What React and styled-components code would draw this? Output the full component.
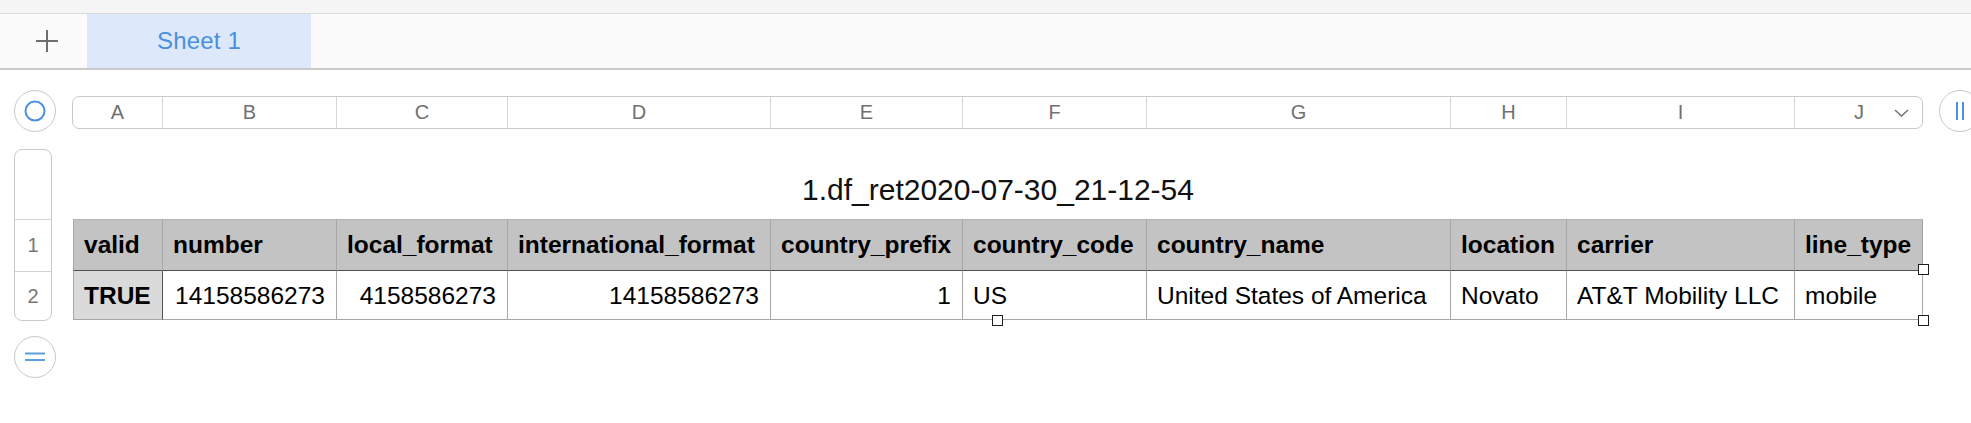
import React from 'react';
import styled, { createGlobalStyle } from 'styled-components';

const GlobalStyle = createGlobalStyle`
  html, body {
    margin: 0;
    padding: 0;
    background: #ffffff;
    overflow: hidden;
  }
  body {
    font-family: "Liberation Sans", Arial, sans-serif;
    color: #000;
  }
`;

const COLUMNS = [
  { letter: 'A', width: 90, title: 'valid' },
  { letter: 'B', width: 174, title: 'number' },
  { letter: 'C', width: 171, title: 'local_format' },
  { letter: 'D', width: 263, title: 'international_format' },
  { letter: 'E', width: 192, title: 'country_prefix' },
  { letter: 'F', width: 184, title: 'country_code' },
  { letter: 'G', width: 304, title: 'country_name' },
  { letter: 'H', width: 116, title: 'location' },
  { letter: 'I', width: 228, title: 'carrier' },
  { letter: 'J', width: 128, title: 'line_type' },
];

const ROW = [
  { value: 'TRUE', align: 'left' },
  { value: '14158586273', align: 'right' },
  { value: '4158586273', align: 'right' },
  { value: '14158586273', align: 'right' },
  { value: '1', align: 'right' },
  { value: 'US', align: 'left' },
  { value: 'United States of America', align: 'left' },
  { value: 'Novato', align: 'left' },
  { value: 'AT&T Mobility LLC', align: 'left' },
  { value: 'mobile', align: 'left' },
];

const gridColumns = COLUMNS.map(c => `${c.width}px`).join(' ');

const Page = styled.div`
  width: 1971px;
  height: 423px;
  background: #ffffff;
`;

const TopStrip = styled.div`
  height: 13px;
  background: #f5f5f5;
  border-bottom: 1px solid #d9d9d9;
`;

const TabBar = styled.div`
  display: flex;
  height: 54px;
  background: #fbfbfb;
  border-bottom: 2px solid #cbcbcb;
`;

const AddSheet = styled.div`
  width: 87px;
  display: flex;
  align-items: center;
  justify-content: center;
  padding-left: 6px;
  box-sizing: border-box;
`;

const SheetTab = styled.div`
  width: 224px;
  display: flex;
  align-items: center;
  justify-content: center;
  background: #dde9fa;
  color: #4a8fdd;
  font-size: 24px;
  letter-spacing: 0.2px;
`;

const Canvas = styled.div`
  display: flex;
  align-items: flex-start;
  padding: 20px 0 0 14px;
`;

const LeftRail = styled.div`
  width: 42px;
  display: flex;
  flex-direction: column;
  align-items: flex-start;
`;

const RoundButton = styled.div`
  width: 42px;
  height: 42px;
  flex-shrink: 0;
  box-sizing: border-box;
  border: 1px solid #c9c9c9;
  border-radius: 50%;
  background: #ffffff;
  display: flex;
  align-items: center;
  justify-content: center;
  margin-top: ${props => props.$mt || 0}px;
`;

const RowHeader = styled.div`
  margin-top: 17px;
  width: 36px;
  border: 1px solid #c9c9c9;
  border-radius: 8px;
  background: #ffffff;
  display: flex;
  flex-direction: column;
`;

const RowLabel = styled.div`
  height: ${props => props.$h}px;
  border-top: ${props => (props.$line ? '1px solid #d3d3d3' : 'none')};
  display: flex;
  align-items: center;
  justify-content: center;
  color: #777777;
  font-size: 20px;
`;

const Main = styled.div`
  width: 1850px;
  margin-left: 17px;
  flex-shrink: 0;
`;

const ColumnBar = styled.div`
  position: relative;
  margin-top: 6px;
  height: 33px;
  box-sizing: border-box;
  border: 1px solid #c9c9c9;
  border-radius: 7px;
  display: grid;
  grid-template-columns: ${gridColumns};
  margin-left: -1px;
  width: 1851px;
`;

const ColumnLetter = styled.div`
  display: flex;
  align-items: center;
  justify-content: center;
  color: #707070;
  font-size: 20px;
  border-right: ${props => (props.$last ? 'none' : '1px solid #d6d6d6')};
`;

const Chevron = styled.svg`
  position: absolute;
  right: 13px;
  top: 12px;
`;

const TableTitle = styled.div`
  height: 90px;
  box-sizing: border-box;
  padding-top: 46px;
  text-align: center;
  font-size: 30px;
  line-height: 30px;
  color: #111111;
`;

const TableWrap = styled.div`
  position: relative;
`;

const TableGrid = styled.div`
  display: grid;
  grid-template-columns: ${gridColumns};
`;

const HeaderCell = styled.div`
  height: 52px;
  box-sizing: border-box;
  display: flex;
  align-items: center;
  padding: 0 10px;
  background: #c3c3c3;
  border-top: 1px solid #b3b3b3;
  border-bottom: 1px solid #505050;
  border-right: 1px solid ${props => (props.$last ? '#a0a0a0' : '#a8a8a8')};
  border-left: ${props => (props.$first ? '1px solid #a8a8a8' : 'none')};
  font-size: 24.5px;
  font-weight: bold;
  white-space: nowrap;
  overflow: hidden;
`;

const BodyCell = styled.div`
  height: 49px;
  box-sizing: border-box;
  display: flex;
  align-items: center;
  justify-content: ${props => (props.$align === 'right' ? 'flex-end' : 'flex-start')};
  padding: 2px ${props => (props.$align === 'right' ? 11 : 10)}px 0 10px;
  background: ${props => (props.$first ? '#dadada' : '#ffffff')};
  border-bottom: 1px solid #a6a6a6;
  border-right: 1px solid ${props => (props.$first ? '#4f4f4f' : '#a8a8a8')};
  border-left: ${props => (props.$first ? '1px solid #a8a8a8' : 'none')};
  font-size: 24.5px;
  font-weight: ${props => (props.$first ? 'bold' : 'normal')};
  white-space: nowrap;
`;

const Handle = styled.div`
  position: absolute;
  width: 11px;
  height: 11px;
  box-sizing: border-box;
  border: 1px solid #1c1c1c;
  background: #ffffff;
  ${props => props.$pos === 'right' && 'right: -6px; top: 45px;'}
  ${props => props.$pos === 'bottom' && 'left: calc(50% - 6px); bottom: -6px;'}
  ${props => props.$pos === 'corner' && 'right: -6px; bottom: -6px;'}
`;

const RightRail = styled.div`
  margin-left: 16px;
  flex-shrink: 0;
`;

const PlusIcon = () => (
  <svg width="22" height="22" viewBox="0 0 22 22">
    <path d="M11 0 V22 M0 11 H22" stroke="#6e6e6e" strokeWidth="2" fill="none" />
  </svg>
);

const RingIcon = () => (
  <svg width="22" height="22" viewBox="0 0 22 22">
    <circle cx="11" cy="11" r="9.5" stroke="#4a90e2" strokeWidth="2" fill="none" />
  </svg>
);

const EqualsIcon = () => (
  <svg width="22" height="10" viewBox="0 0 22 10">
    <path d="M1 1.5 H21 M1 8 H21" stroke="#5d9fdc" strokeWidth="2" fill="none" />
  </svg>
);

const PauseIcon = () => (
  <svg width="10" height="18" viewBox="0 0 10 18">
    <path d="M2 0 V18 M8 0 V18" stroke="#4a90e2" strokeWidth="2" fill="none" />
  </svg>
);

export default function App() {
  return (
    <Page>
      <GlobalStyle />
      <TopStrip />
      <TabBar>
        <AddSheet>
          <PlusIcon />
        </AddSheet>
        <SheetTab>Sheet 1</SheetTab>
      </TabBar>

      <Canvas>
        <LeftRail>
          <RoundButton>
            <RingIcon />
          </RoundButton>
          <RowHeader>
            <RowLabel $h={69} />
            <RowLabel $h={51} $line>1</RowLabel>
            <RowLabel $h={48} $line>2</RowLabel>
          </RowHeader>
          <RoundButton $mt={15}>
            <EqualsIcon />
          </RoundButton>
        </LeftRail>

        <Main>
          <ColumnBar>
            {COLUMNS.map((col, i) => (
              <ColumnLetter key={col.letter} $last={i === COLUMNS.length - 1}>
                {col.letter}
              </ColumnLetter>
            ))}
            <Chevron width="15" height="8" viewBox="0 0 15 8">
              <path d="M1 1 L7.5 7 L14 1" stroke="#777777" strokeWidth="1.6" fill="none" />
            </Chevron>
          </ColumnBar>

          <TableTitle>1.df_ret2020-07-30_21-12-54</TableTitle>

          <TableWrap>
            <TableGrid>
              {COLUMNS.map((col, i) => (
                <HeaderCell key={col.title} $first={i === 0} $last={i === COLUMNS.length - 1}>
                  {col.title}
                </HeaderCell>
              ))}
              {ROW.map((cell, i) => (
                <BodyCell key={i} $first={i === 0} $align={cell.align}>
                  {cell.value}
                </BodyCell>
              ))}
            </TableGrid>
            <Handle $pos="right" />
            <Handle $pos="bottom" />
            <Handle $pos="corner" />
          </TableWrap>
        </Main>

        <RightRail>
          <RoundButton>
            <PauseIcon />
          </RoundButton>
        </RightRail>
      </Canvas>
    </Page>
  );
}
